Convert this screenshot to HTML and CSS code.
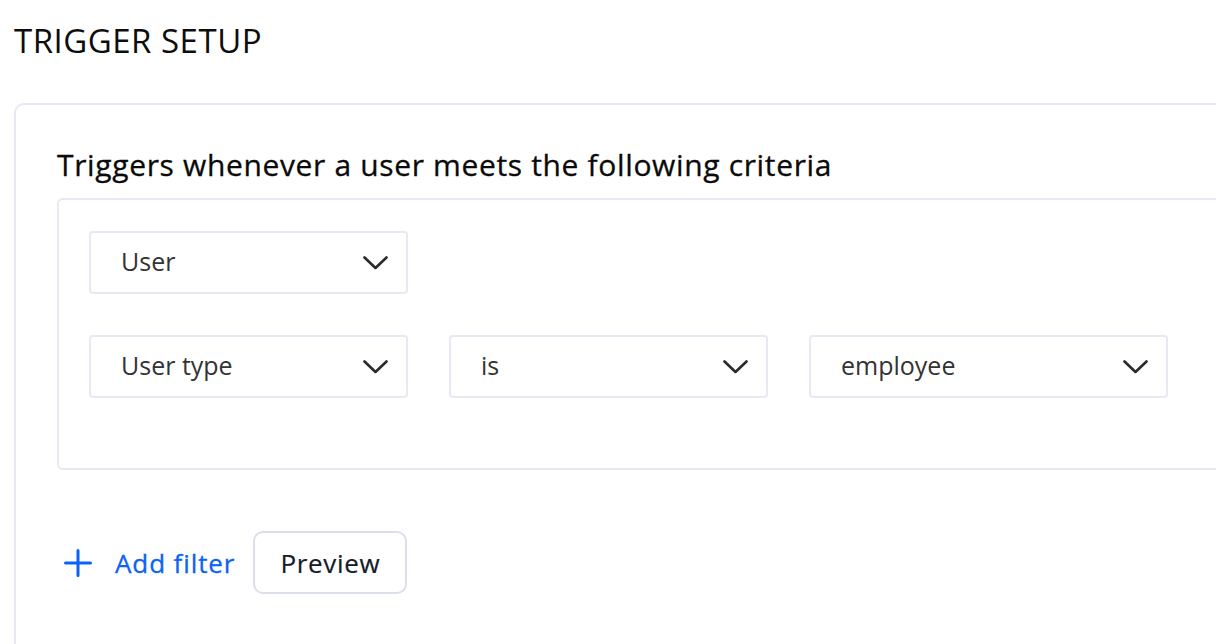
FILE: index.html
```html
<!DOCTYPE html>
<html lang="en">
<head>
    <meta charset="UTF-8">
    <meta name="viewport" content="width=device-width, initial-scale=1.0">
    <title>Trigger Setup</title>
    <link rel="stylesheet" href="styles.css">
</head>
<body>
    <h1 class="page-title">TRIGGER SETUP</h1>

    <section class="card">
        <h2 class="card-title">Triggers whenever a user meets the following criteria</h2>

        <div class="criteria">
            <div class="criteria-row">
                <div class="select">
                    <span>User</span>
                    <svg class="chevron" viewBox="0 0 25 14"><path d="M1.5 1.5l11 10.5 11-10.5"/></svg>
                </div>
            </div>
            <div class="criteria-row">
                <div class="select">
                    <span>User type</span>
                    <svg class="chevron" viewBox="0 0 25 14"><path d="M1.5 1.5l11 10.5 11-10.5"/></svg>
                </div>
                <div class="select">
                    <span>is</span>
                    <svg class="chevron" viewBox="0 0 25 14"><path d="M1.5 1.5l11 10.5 11-10.5"/></svg>
                </div>
                <div class="select select-wide">
                    <span>employee</span>
                    <svg class="chevron" viewBox="0 0 25 14"><path d="M1.5 1.5l11 10.5 11-10.5"/></svg>
                </div>
            </div>
        </div>

        <div class="actions">
            <button type="button" class="btn-add">
                <svg class="plus" viewBox="0 0 28 28"><path d="M14 1.5v25M1.5 14h25"/></svg>
                Add filter
            </button>
            <button type="button" class="btn-preview">Preview</button>
        </div>
    </section>
</body>
</html>
```

FILE: styles.css
```css
* {
    margin: 0;
    padding: 0;
    box-sizing: border-box;
    font-family: "Open Sans", "Noto Sans", sans-serif;
}

body {
    background: #fff;
    color: #111;
    overflow: hidden;
    padding-left: 14px;
}

.page-title {
    font-size: 33px;
    font-weight: 400;
    letter-spacing: 0.5px;
    line-height: 40px;
    margin-top: 21px;
    margin-bottom: 42px;
    color: #0d0d0d;
}

.card {
    border: 2px solid #e6e9f3;
    border-radius: 10px;
    margin-right: -60px;
    padding: 42px 0 120px 41px;
}

.card-title {
    font-size: 30px;
    font-weight: 500;
    letter-spacing: 0.65px;
    line-height: 36px;
    margin-bottom: 15px;
    color: #0a0a0a;
    -webkit-text-stroke: 0.3px #0a0a0a;
}

.criteria {
    border: 2px solid #e6e9f3;
    border-radius: 6px;
    padding: 31px 30px 70px;
    display: flex;
    flex-direction: column;
    gap: 41px;
}

.criteria-row {
    display: flex;
    gap: 41px;
}

.select {
    width: 319px;
    height: 63px;
    border: 2px solid #e6e9f3;
    border-radius: 4px;
    display: flex;
    align-items: center;
    justify-content: space-between;
    padding: 0 18px 3px 30px;
    font-size: 25px;
    color: #333;
}

.select .chevron {
    margin-top: 3px;
}

.select-wide {
    width: 359px;
}

.chevron {
    width: 25px;
    height: 14px;
    fill: none;
    stroke: #2b2b2b;
    stroke-width: 2.6;
    stroke-linecap: round;
    stroke-linejoin: round;
}

.actions {
    display: flex;
    align-items: center;
    gap: 18px;
    margin-top: 61px;
}

.btn-add {
    display: flex;
    align-items: center;
    gap: 23px;
    background: none;
    border: none;
    padding-left: 7px;
    font-size: 26px;
    font-weight: 500;
    letter-spacing: 0.9px;
    color: #0b63f3;
    -webkit-text-stroke: 0.3px #0b63f3;
    cursor: pointer;
}

.plus {
    width: 28px;
    height: 28px;
    fill: none;
    stroke: #0b63f3;
    stroke-width: 3;
    stroke-linecap: round;
}

.btn-preview {
    height: 63px;
    padding: 0 25px;
    background: #fff;
    border: 2px solid #dadfe9;
    border-radius: 10px;
    font-size: 26px;
    font-weight: 500;
    letter-spacing: 0.7px;
    color: #141c28;
    -webkit-text-stroke: 0.2px #141c28;
    cursor: pointer;
}
```
